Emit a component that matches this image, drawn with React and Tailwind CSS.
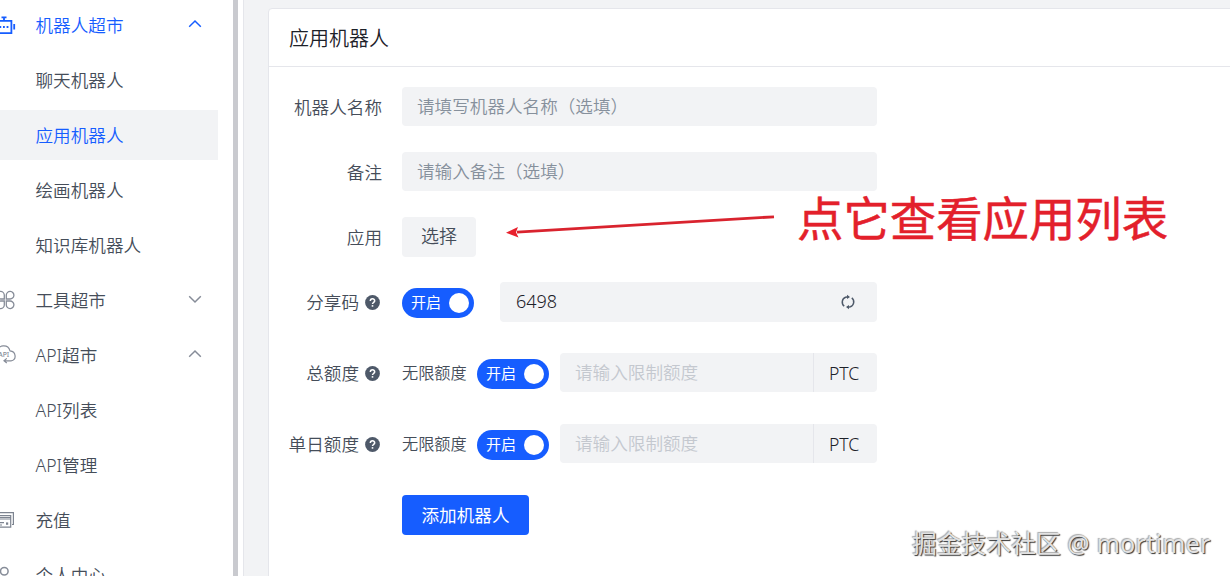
import { useState } from 'react';

const menu = [
  { label: '机器人超市', icon: 'robot', open: true, active: true },
  { label: '聊天机器人' },
  { label: '应用机器人', selected: true },
  { label: '绘画机器人' },
  { label: '知识库机器人' },
  { label: '工具超市', icon: 'tools', open: false },
  { label: 'API超市', icon: 'api', open: true },
  { label: 'API列表' },
  { label: 'API管理' },
  { label: '充值', icon: 'card' },
  { label: '个人中心', icon: 'user' },
];

const MenuIcon = ({ name }) => {
  if (name === 'robot') {
    return (
      <svg width="16" height="22" viewBox="0 0 16 22" fill="none" stroke="#165dff" strokeWidth="1.8">
        <path d="M-4 6.8H11.4V19.2H-4M1.5 3.3H6.5M4 3V7M14.2 10V15.5" />
        <path d="M-1 13H1.2M3 13H4.8M6.6 13H8.4" strokeWidth="2" />
      </svg>
    );
  }
  if (name === 'tools') {
    return (
      <svg width="16" height="20" viewBox="0 0 16 20" fill="none" stroke="#868c98" strokeWidth="1.3">
        <path d="M6.3 9H9.8A3.8 3.8 0 1 0 6.3 5ZM4.3 9V5A3.8 3.8 0 1 0 .5 9ZM6.3 11H9.8A3.8 3.8 0 1 1 6.3 15ZM4.3 11V15A3.8 3.8 0 1 1 .5 11Z" />
      </svg>
    );
  }
  if (name === 'api') {
    return (
      <svg width="17" height="22" viewBox="0 0 17 22" fill="none" stroke="#868c98" strokeWidth="1.2">
        <path d="M-3 8C-2 .5 8 -.2 10 6.8C16.2 7.3 17 16 11 16.8H4M6.8 14.4L4 16.8L6.8 19" />
        <text x="-1.8" y="12.6" fontSize="6.8" fontWeight="500" fill="#868c98" stroke="none">API</text>
      </svg>
    );
  }
  if (name === 'card') {
    return (
      <svg width="16" height="20" viewBox="0 0 16 20" fill="none" stroke="#7d8490" strokeWidth="1.2">
        <path d="M-2 2.7H13.4V14.5H12M-2 5.7H10.7V17.2H-2M-2 9H10.7M-2 7.5H10.7M0 12.6H4M0 15H2" />
        <path d="M6 13.6H8.2" strokeWidth="2.4" />
      </svg>
    );
  }
  return (
    <svg width="16" height="22" viewBox="0 0 16 22" fill="none" stroke="#868c98" strokeWidth="1.5">
      <circle cx="4.3" cy="7.3" r="3.8" />
      <path d="M-4 20C-3 11 11.5 11 12.5 20" />
    </svg>
  );
};

const Chevron = ({ open, active }) => (
  <svg width="14" height="10" viewBox="0 0 14 10" fill="none" stroke={active ? '#165dff' : '#868c98'} strokeWidth="1.5">
    <path d={open ? 'M1.2 7.7L7 2L12.8 7.7' : 'M1.2 2.3L7 8L12.8 2.3'} />
  </svg>
);

const MenuItem = ({ item }) => (
  <div
    className={`flex h-[50px] w-[218px] shrink-0 items-center ${item.selected ? 'bg-[#f2f3f5]' : ''} ${
      item.selected || item.active ? 'text-[#165dff]' : 'text-[#454d59]'
    }`}
  >
    <div className="w-[35.5px]">{item.icon && <MenuIcon name={item.icon} />}</div>
    <span className="flex-1">{item.label}</span>
    {item.open !== undefined && (
      <div className="mr-4 -mt-0.5">
        <Chevron open={item.open} active={item.active} />
      </div>
    )}
  </div>
);

const Help = () => (
  <svg className="ml-1.5 mr-0.5" width="15" height="15" viewBox="0 0 15 15" fill="none">
    <circle cx="7.5" cy="7.5" r="7.4" fill="#4e5969" />
    <path d="M5.3 6.1C5.3 3.1 9.8 3.2 9.7 5.9C9.6 7.4 7.5 7.2 7.5 9.1" stroke="white" strokeWidth="1.5" />
    <path d="M7.5 10.1V11.7" stroke="white" strokeWidth="1.6" />
  </svg>
);

const Row = ({ label, help, children, className }) => (
  <div className={`flex h-10 items-center ${className}`}>
    <div className="mr-5 flex w-[113px] items-center justify-end whitespace-nowrap text-[#454d59]">
      {label}
      {help && <Help />}
    </div>
    {children}
  </div>
);

const Toggle = () => {
  const [on, setOn] = useState(true);
  return (
    <button
      onClick={() => setOn(!on)}
      className={`mt-0.5 flex h-[30px] w-[72px] shrink-0 items-center justify-between rounded-full pl-[9px] pr-[5px] text-[15px] font-normal text-white ${
        on ? 'bg-[#165dff]' : 'flex-row-reverse bg-[#c9cdd4]'
      }`}
    >
      <span className="pb-0.5">{on ? '开启' : '关闭'}</span>
      <span className="size-5 rounded-full bg-white" />
    </button>
  );
};

const QuotaField = () => (
  <>
    <span className="w-[75px] whitespace-nowrap text-[16.2px] text-[#454d59]">无限额度</span>
    <Toggle />
    <div className="ml-[11px] flex h-[39px] w-[317px] self-start rounded-sm bg-[#f2f3f5]">
      <input
        disabled
        placeholder="请输入限制额度"
        className="w-[253px] pb-0.5 pl-[15px] placeholder:text-[#c4c8cf]"
      />
      <div className="flex flex-1 items-center border-l border-[#e5e6eb] pl-[15px] text-[#1d2129]">PTC</div>
    </div>
  </>
);

export default function App() {
  const [code, setCode] = useState('6498');

  return (
    <div className="relative flex h-[576px] w-[1230px] overflow-hidden bg-[#f2f3f5] font-['Noto_Sans','Noto_Sans_CJK_SC',sans-serif] text-[17.6px] font-[350] leading-6">
      {/* Sidebar */}
      <div className="flex w-[233px] shrink-0 flex-col gap-[5px] bg-white">
        {menu.map((item) => (
          <MenuItem key={item.label} item={item} />
        ))}
      </div>
      <div className="w-[5px] shrink-0 bg-[#c9cacf]" />
      <div className="w-[6px] shrink-0 border-r border-[#e5e6eb] bg-white" />

      {/* Content */}
      <div className="ml-6 mt-2 h-[600px] w-[1000px] shrink-0 rounded-sm border border-[#e5e6eb] bg-white">
        <div className="flex h-[58px] items-center border-b border-[#e5e6eb] px-5 pt-0.5 text-[20px] text-[#1d2129]">
          应用机器人
        </div>
        <div className="pt-5">
          <Row label="机器人名称" className="mb-[25px]">
            <input
              placeholder="请填写机器人名称（选填）"
              className="h-[39px] w-[475px] self-start rounded-sm bg-[#f2f3f5] px-[15px] pb-0.5 placeholder:text-[#86909c]"
            />
          </Row>
          <Row label="备注" className="mb-[25px]">
            <input
              placeholder="请输入备注（选填）"
              className="h-[39px] w-[475px] self-start rounded-sm bg-[#f2f3f5] px-[15px] pb-0.5 placeholder:text-[#86909c]"
            />
          </Row>
          <Row label="应用" className="mb-[25px]">
            <button className="h-10 w-[74px] rounded-sm bg-[#f2f3f5] pb-0.5 text-[18px] text-[#454d59]">选择</button>
          </Row>
          <Row label="分享码" help className="mb-[31px]">
            <Toggle />
            <div className="ml-[26px] flex h-10 w-[377px] items-center rounded-sm bg-[#f2f3f5] pl-4 pr-[22px]">
              <input
                value={code}
                onChange={(e) => setCode(e.target.value)}
                className="min-w-0 flex-1 pb-0.5 text-[18px] text-[#1d2129]"
              />
              <svg width="14" height="16" viewBox="0 0 14 16" fill="none" stroke="#4e5969" strokeWidth="1.5">
                <path d="M3.2 12.1A5.2 5.2 0 0 1 4.6 3.2L7.5 2.8M10.8 3.9A5.2 5.2 0 0 1 9.4 12.8L6.5 13.2" />
                <path d="M6 .8L9 2.9L6 5ZM8 11L5 13.1L8 15.2Z" fill="#4e5969" stroke="none" />
              </svg>
            </div>
          </Row>
          <Row label="总额度" help className="mb-[31px]">
            <QuotaField />
          </Row>
          <Row label="单日额度" help className="mb-[31px]">
            <QuotaField />
          </Row>
          <button className="ml-[133px] h-10 w-[127px] rounded-sm bg-[#165dff] font-normal text-white">添加机器人</button>
        </div>
      </div>

      {/* Annotation */}
      <svg className="absolute left-[505px] top-[210px]" width="272" height="32" viewBox="0 0 272 32">
        <path d="M12 22.2L269 6.8" stroke="#d9232e" strokeWidth="2.8" />
        <path d="M1 22.8L13 17L11 22.3L13.5 27.5Z" fill="#e8202c" />
      </svg>
      <div className="absolute left-[797px] top-[188px] whitespace-nowrap text-[46.4px] font-normal leading-[60px] text-[#e3202b] [-webkit-text-stroke:0.5px_#e3202b]">
        点它查看应用列表
      </div>

      {/* Watermark */}
      <div className="absolute left-[912px] top-[526px] whitespace-nowrap text-[24.8px] font-normal leading-[34px] text-[#e2e2e2] [text-shadow:1px_1px_1px_#333,-1px_-1px_1px_#aaa]">
        掘金技术社区 <span className="tracking-[0.35px]">@ mortimer</span>
      </div>
    </div>
  );
}
